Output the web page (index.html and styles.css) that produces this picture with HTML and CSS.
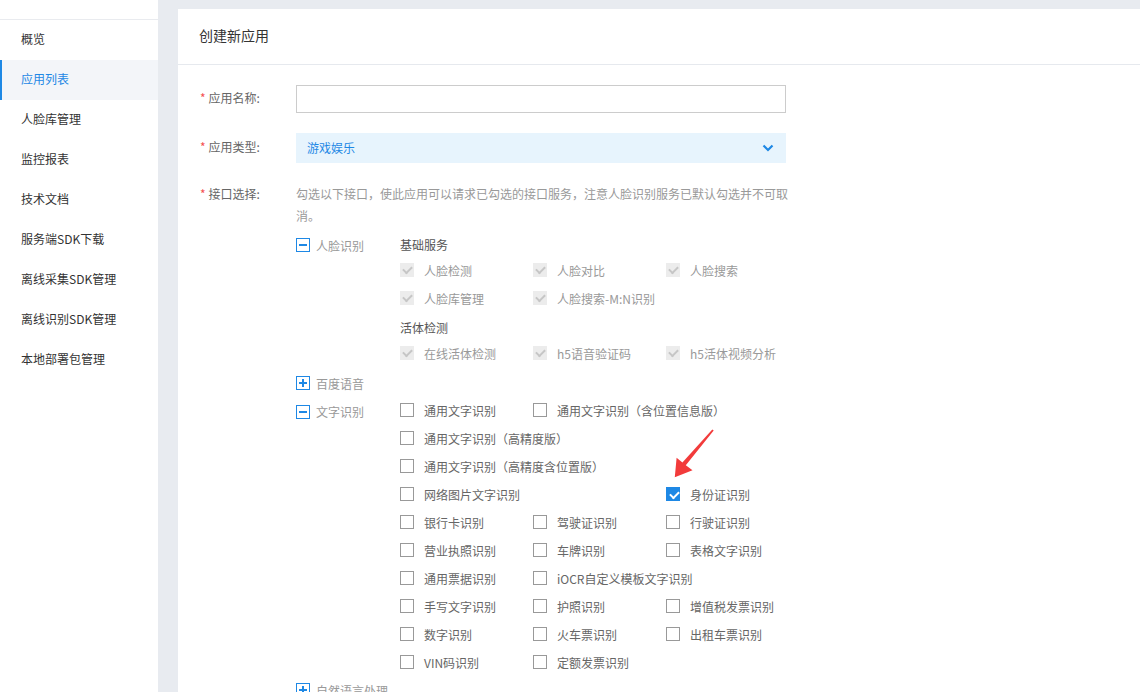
FILE: index.html
```html
<!DOCTYPE html>
<html lang="zh-CN">
<head>
<meta charset="utf-8">
<title>创建新应用</title>
<link rel="stylesheet" href="styles.css">
</head>
<body>
<div class="layout">
  <aside class="sidebar">
    <ul class="menu">
      <li class="menu-item">概览</li>
      <li class="menu-item active">应用列表</li>
      <li class="menu-item">人脸库管理</li>
      <li class="menu-item">监控报表</li>
      <li class="menu-item">技术文档</li>
      <li class="menu-item">服务端SDK下载</li>
      <li class="menu-item">离线采集SDK管理</li>
      <li class="menu-item">离线识别SDK管理</li>
      <li class="menu-item">本地部署包管理</li>
    </ul>
  </aside>

  <main class="main">
    <section class="card">
      <header class="card-head">创建新应用</header>
      <div class="form">
        <div class="form-row">
          <label class="form-label"><span class="req">*</span>应用名称:</label>
          <input class="text-input" type="text">
        </div>
        <div class="form-row">
          <label class="form-label"><span class="req">*</span>应用类型:</label>
          <div class="select">
            <span>游戏娱乐</span>
            <svg class="chevron" width="12" height="8" viewBox="0 0 12 8"><path d="M1.5 1.5 L6 6 L10.5 1.5" fill="none" stroke="#1e88e5" stroke-width="2.2"/></svg>
          </div>
        </div>
        <div class="form-row top">
          <label class="form-label"><span class="req">*</span>接口选择:</label>
          <div class="api-area">
            <p class="desc">勾选以下接口，使此应用可以请求已勾选的接口服务，注意人脸识别服务已默认勾选并不可取消。</p>

            <div class="tree">
              <div class="group">
                <div class="group-title"><span class="toggle minus"></span>人脸识别</div>
                <div class="group-body">
                  <div class="sub-title">基础服务</div>
                  <div class="grid">
                    <span class="opt disabled"><i class="box"></i>人脸检测</span>
                    <span class="opt disabled"><i class="box"></i>人脸对比</span>
                    <span class="opt disabled"><i class="box"></i>人脸搜索</span>
                    <span class="opt disabled"><i class="box"></i>人脸库管理</span>
                    <span class="opt disabled"><i class="box"></i>人脸搜索-M:N识别</span>
                  </div>
                  <div class="sub-title spaced">活体检测</div>
                  <div class="grid">
                    <span class="opt disabled"><i class="box"></i>在线活体检测</span>
                    <span class="opt disabled"><i class="box"></i>h5语音验证码</span>
                    <span class="opt disabled"><i class="box"></i>h5活体视频分析</span>
                  </div>
                </div>
              </div>

              <div class="group single">
                <div class="group-title"><span class="toggle plus"></span>百度语音</div>
              </div>

              <div class="group">
                <div class="group-title row-title"><span class="toggle minus"></span>文字识别</div>
                <div class="group-body">
                  <div class="grid">
                    <span class="opt"><i class="box"></i>通用文字识别</span>
                    <span class="opt"><i class="box"></i>通用文字识别（含位置信息版）</span>
                    <span class="opt wide"><i class="box"></i>通用文字识别（高精度版）</span>
                    <span class="opt wide"><i class="box"></i>通用文字识别（高精度含位置版）</span>
                    <span class="opt"><i class="box"></i>网络图片文字识别</span>
                    <span class="opt checked col3"><i class="box"></i>身份证识别</span>
                    <span class="opt"><i class="box"></i>银行卡识别</span>
                    <span class="opt"><i class="box"></i>驾驶证识别</span>
                    <span class="opt"><i class="box"></i>行驶证识别</span>
                    <span class="opt"><i class="box"></i>营业执照识别</span>
                    <span class="opt"><i class="box"></i>车牌识别</span>
                    <span class="opt"><i class="box"></i>表格文字识别</span>
                    <span class="opt"><i class="box"></i>通用票据识别</span>
                    <span class="opt"><i class="box"></i>iOCR自定义模板文字识别</span>
                    <span class="opt empty"></span>
                    <span class="opt"><i class="box"></i>手写文字识别</span>
                    <span class="opt"><i class="box"></i>护照识别</span>
                    <span class="opt"><i class="box"></i>增值税发票识别</span>
                    <span class="opt"><i class="box"></i>数字识别</span>
                    <span class="opt"><i class="box"></i>火车票识别</span>
                    <span class="opt"><i class="box"></i>出租车票识别</span>
                    <span class="opt"><i class="box"></i>VIN码识别</span>
                    <span class="opt"><i class="box"></i>定额发票识别</span>
                  </div>
                </div>
              </div>

              <div class="group single last">
                <div class="group-title"><span class="toggle plus"></span>自然语言处理</div>
              </div>
            </div>
          </div>
        </div>
      </div>
    </section>
  </main>
</div>

<svg class="pointer-arrow" width="1140" height="692" viewBox="0 0 1140 692">
  <polygon points="712.3,429.4 713.7,430.6 685.8,465.2 692.5,470.2 674.8,477.2 676.6,457.8 682.4,462.6" fill="#f23b3b"/>
</svg>
</body>
</html>
```

FILE: styles.css
```css
* { box-sizing: border-box; }

html, body {
  margin: 0;
  padding: 0;
  height: 100%;
}

body {
  font-family: "Noto Sans CJK SC", "Noto Sans", "Liberation Sans", sans-serif;
  font-size: 12px;
  color: #333;
  background: #e8ebf0;
  overflow: hidden;
  position: relative;
}

.layout {
  display: flex;
  height: 692px;
}

/* left navigation */
.sidebar {
  width: 158px;
  flex: none;
  background: #fff;
  padding-top: 19px;
}

.menu {
  list-style: none;
  margin: 0;
  padding: 0;
  border-top: 1px solid #e9ebef;
}

.menu-item {
  height: 40px;
  line-height: 38px;
  color: #333;
  border-left: 2px solid transparent;
  padding-left: 19px;
}

.menu-item.active {
  background: #f3f5f9;
  border-left-color: #1e88e5;
  color: #1e88e5;
}

/* main area */
.main {
  flex: 1;
  padding: 9px 0 0 20px;
  min-width: 0;
}

.card {
  background: #fff;
  height: 100%;
}

.card-head {
  height: 56px;
  line-height: 53px;
  padding-left: 21px;
  font-size: 14px;
  color: #333;
  border-bottom: 1px solid #e6e9ee;
}

.form {
  padding: 20px 0 0 22px;
}

.form-row {
  display: flex;
  align-items: center;
  margin-bottom: 20px;
}

.form-row.top {
  align-items: flex-start;
}

.form-label {
  width: 96px;
  flex: none;
  color: #666;
  line-height: 22px;
  padding-bottom: 2px;
}

.form-row.top .form-label {
  padding-bottom: 0;
}

.req {
  color: #f45050;
  margin-right: 3px;
}

.text-input {
  width: 490px;
  height: 28px;
  border: 1px solid #ccc;
  border-radius: 0;
  outline: none;
  padding: 0 10px;
  font: inherit;
}

.select {
  width: 490px;
  height: 30px;
  background: #e7f4fd;
  display: flex;
  align-items: center;
  justify-content: space-between;
  padding: 0 11px;
  color: #1e88e5;
}

.select span { padding-bottom: 1px; }

.chevron { display: block; margin-right: 1px; }

.api-area {
  flex: 1;
  min-width: 0;
}

.desc {
  margin: 0;
  width: 496px;
  line-height: 22px;
  color: #999;
}

.tree {
  margin-top: 7px;
}

.group {
  display: flex;
  align-items: flex-start;
}

.group.single {
  height: 26px;
  align-items: center;
  margin-top: 3px;
}

.group.single.last {
  margin-top: 0;
  height: 28px;
}

.group-title {
  width: 104px;
  flex: none;
  display: flex;
  align-items: center;
  gap: 6px;
  height: 22px;
  color: #999;
}

.group-title.row-title {
  height: 28px;
  padding-top: 3px;
}

.toggle {
  width: 14px;
  height: 14px;
  border: 1px solid #1e88e5;
  position: relative;
  flex: none;
}

.toggle::before,
.toggle::after {
  content: "";
  position: absolute;
  background: #1e88e5;
}

.toggle::before {
  left: 2px;
  right: 2px;
  top: 5px;
  height: 2px;
}

.toggle.plus::after {
  top: 2px;
  bottom: 2px;
  left: 5px;
  width: 2px;
}

.sub-title {
  line-height: 22px;
  color: #555;
}

.sub-title.spaced {
  margin-top: 5px;
}

.grid {
  display: grid;
  grid-template-columns: repeat(3, 133px);
  grid-auto-rows: 28px;
}

.opt {
  display: flex;
  align-items: center;
  gap: 10px;
  white-space: nowrap;
  color: #666;
}

.opt.wide { grid-column: 1 / span 3; }
.opt.col3 { grid-column: 3; }

.box {
  width: 14px;
  height: 14px;
  flex: none;
  border: 1px solid #999;
  background: #fff;
  position: relative;
}

.opt.disabled { color: #999; }

.opt.disabled .box {
  border: none;
  background: #ececec;
}

.opt.disabled .box::after,
.opt.checked .box::after {
  content: "";
  position: absolute;
  left: 3px;
  top: 2px;
  width: 7px;
  height: 4px;
  border-left: 2px solid #c6c6c6;
  border-bottom: 2px solid #c6c6c6;
  transform: translate(0, 1px) rotate(-45deg);
}

.opt.checked .box {
  border-color: #1e88e5;
  background: #1e88e5;
}

.opt.checked .box::after {
  border-color: #fff;
}

.pointer-arrow {
  position: absolute;
  left: 0;
  top: 0;
  pointer-events: none;
}
```
